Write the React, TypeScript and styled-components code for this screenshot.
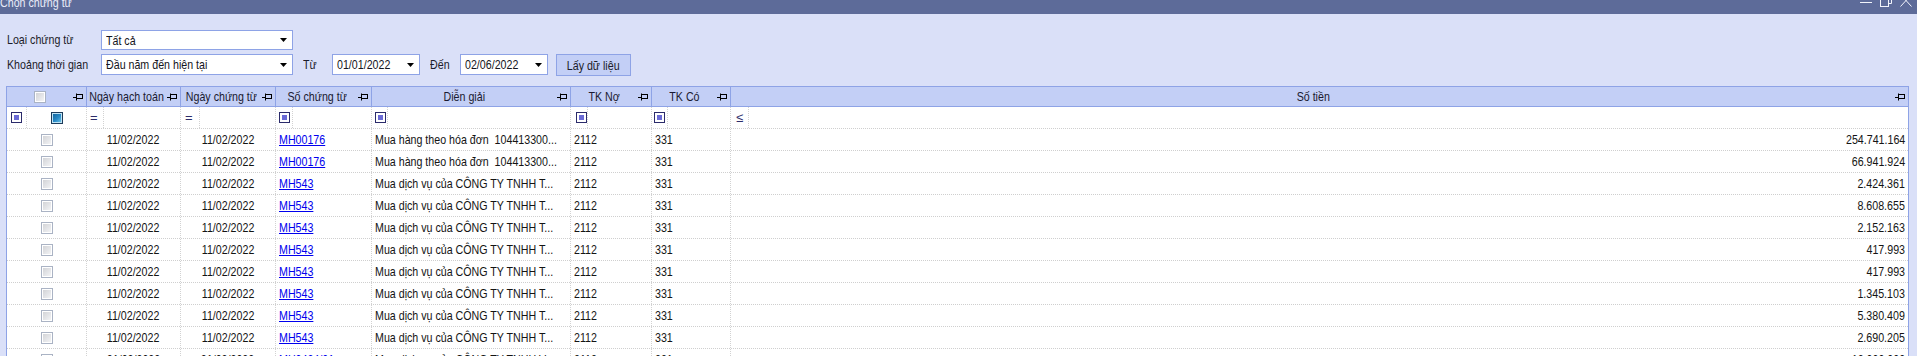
import React from 'react';
import styled, { createGlobalStyle } from 'styled-components';

const FONT = `"Liberation Sans", Arial, sans-serif`;

const GlobalStyle = createGlobalStyle`
  html, body { margin: 0; padding: 0; background: #dae0f8; }
  body { font-family: ${FONT}; font-size: 13px; color: #141414; }
  #root { width: 1917px; height: 356px; overflow: hidden; }
`;

/* Condensed text: the reference uses a narrow face, rendered here by scaling Liberation Sans */
const T = styled.span<{ $o?: 'left' | 'center' | 'right' }>`
  display: inline-block;
  white-space: pre;
  transform: scaleX(0.82);
  transform-origin: ${(p) => p.$o ?? 'left'} center;
`;

const Window = styled.div`
  width: 1917px;
  height: 356px;
  display: flex;
  flex-direction: column;
  background: #dae0f8;
  overflow: hidden;
`;

const TitleBar = styled.div`
  flex: 0 0 14px;
  height: 14px;
  background: #5d6b99;
  display: flex;
  align-items: flex-start;
  justify-content: space-between;
  overflow: hidden;
`;

const TitleText = styled.span`
  color: #e9ecf8;
  font-size: 13px;
  line-height: 14px;
  margin-top: -4px;
  white-space: nowrap;
`;

const Controls = styled.div`
  display: flex;
  gap: 8px;
  margin-top: -6px;
  margin-right: 5px;
`;

const Body = styled.div`
  flex: 1;
  display: flex;
  flex-direction: column;
  padding: 0 8px 0 6px;
  min-height: 0;
`;

const Form = styled.div`
  display: flex;
  flex-direction: column;
  gap: 4px;
  padding: 16px 0 0 1px;
`;

const FormRow = styled.div<{ $h: number }>`
  display: flex;
  align-items: flex-start;
  height: ${(p) => p.$h}px;
`;

const FieldLabel = styled.span<{ $h: number }>`
  width: 94px;
  flex: none;
  line-height: ${(p) => p.$h}px;
  white-space: nowrap;
  color: #1c1c2a;
`;

const InlineLabel = styled.span<{ $w: number }>`
  width: ${(p) => p.$w}px;
  margin-left: 10px;
  flex: none;
  line-height: 21px;
  white-space: nowrap;
  color: #1c1c2a;
`;

const Combo = styled.div<{ $w: number; $h: number }>`
  width: ${(p) => p.$w}px;
  height: ${(p) => p.$h}px;
  flex: none;
  box-sizing: border-box;
  border: 1px solid #8ea3e6;
  background: #fff;
  display: flex;
  align-items: center;
  justify-content: space-between;
  padding: 0 5px 0 4px;
  color: #141420;
  overflow: hidden;
`;

const Button = styled.button`
  width: 75px;
  height: 22px;
  margin-left: 8px;
  flex: none;
  box-sizing: border-box;
  border: 1px solid #8ea3e6;
  background: #c3cff6;
  font-family: ${FONT};
  font-size: 13px;
  color: #1c1c2a;
  padding: 0;
  display: flex;
  align-items: center;
  justify-content: center;
  overflow: hidden;
`;

const Grid = styled.div`
  margin-top: 10px;
  flex: 1;
  min-height: 0;
  border: 1px solid #8ea3e6;
  border-bottom: none;
  background: #fff;
  overflow: hidden;
`;

const GridRow = styled.div<{ $h: number; $kind: 'head' | 'filter' | 'data' }>`
  display: grid;
  grid-template-columns: 80px 94px 95px 96px 199px 81px 79px 1fr;
  height: ${(p) => p.$h}px;
  border-bottom: ${(p) => (p.$kind === 'head' ? '1px solid #8ea3e6' : '1px dotted #cfcfcf')};
  background: ${(p) => (p.$kind === 'head' ? '#c3cff6' : '#fff')};
`;

const HeadCell = styled.div<{ $last?: boolean }>`
  display: flex;
  align-items: center;
  padding-right: 2px;
  border-right: ${(p) => (p.$last ? 'none' : '1px solid #8ea3e6')};
  min-width: 0;
`;

const HeadText = styled.span`
  flex: 1;
  white-space: nowrap;
  overflow: hidden;
  color: #1a1a30;
  display: flex;
  justify-content: center;
  align-items: center;
`;

const Cell = styled.div<{ $align?: 'left' | 'center' | 'right'; $last?: boolean }>`
  display: flex;
  align-items: center;
  justify-content: ${(p) => (p.$align === 'center' ? 'center' : p.$align === 'right' ? 'flex-end' : 'flex-start')};
  padding: ${(p) => (p.$align === 'right' ? '0 3px 0 0' : p.$align === 'center' ? '0' : '0 0 0 3px')};
  border-right: ${(p) => (p.$last ? 'none' : '1px dotted #d2d2d2')};
  white-space: nowrap;
  overflow: hidden;
  min-width: 0;
  color: #141414;
`;

const FilterCell = styled.div<{ $last?: boolean }>`
  display: flex;
  align-items: stretch;
  border-right: ${(p) => (p.$last ? 'none' : '1px dotted #d2d2d2')};
  min-width: 0;
`;

const OpCell = styled.div<{ $w: number; $pad: number }>`
  width: ${(p) => p.$w}px;
  flex: none;
  box-sizing: border-box;
  padding-left: ${(p) => p.$pad}px;
  display: flex;
  align-items: center;
  border-right: 1px dotted #d2d2d2;
  color: #2c2c6a;
  font-size: 13px;
`;

const FilterValue = styled.div`
  flex: 1;
  display: flex;
  align-items: center;
  justify-content: center;
`;

const FilterSquare = styled.span`
  width: 11px;
  height: 11px;
  box-sizing: border-box;
  border: 1px solid #2b2b6b;
  background: #6b6bd6;
  box-shadow: inset 0 0 0 2px #fff;
  flex: none;
`;

const Check = styled.span<{ $blue?: boolean }>`
  width: 12px;
  height: 12px;
  box-sizing: border-box;
  flex: none;
  border: 1px solid ${(p) => (p.$blue ? '#1d3b5a' : '#aab3c4')};
  background: ${(p) =>
    p.$blue
      ? 'linear-gradient(135deg, #0f5e96 0%, #2a8cc8 55%, #7fd0ee 100%)'
      : 'linear-gradient(135deg, #cfd0d3 0%, #e6e7ea 60%, #f8f8f8 100%)'};
  box-shadow: inset 0 0 0 1px ${(p) => (p.$blue ? '#bfe3f4' : '#ffffff')};
`;

const Link = styled.a`
  display: inline-block;
  white-space: nowrap;
  color: #0000ee;
  text-decoration: underline;
  cursor: pointer;
  transform: scaleX(0.82);
  transform-origin: left center;
`;

const Pin = () => (
  <svg width="11" height="8" viewBox="0 0 11 8" style={{ flex: 'none' }}>
    <path d="M0 4.5H3.5M3.5 0.5V7.5" stroke="#000" strokeWidth="1" fill="none" />
    <rect x="3.5" y="1.5" width="6" height="4" stroke="#000" strokeWidth="1" fill="none" />
  </svg>
);

const Arrow = () => (
  <svg width="7" height="4" viewBox="0 0 7 4" style={{ flex: 'none' }}>
    <path d="M0 0H7L3.5 4Z" fill="#000" />
  </svg>
);

type Row = { d1: string; d2: string; no: string; desc: string; debit: string; credit: string; amount: string };

const HH = 'Mua hàng theo hóa đơn  104413300...';
const DV = 'Mua dịch vụ của CÔNG TY TNHH T...';

const rows: Row[] = [
  { d1: '11/02/2022', d2: '11/02/2022', no: 'MH00176', desc: HH, debit: '2112', credit: '331', amount: '254.741.164' },
  { d1: '11/02/2022', d2: '11/02/2022', no: 'MH00176', desc: HH, debit: '2112', credit: '331', amount: '66.941.924' },
  { d1: '11/02/2022', d2: '11/02/2022', no: 'MH543', desc: DV, debit: '2112', credit: '331', amount: '2.424.361' },
  { d1: '11/02/2022', d2: '11/02/2022', no: 'MH543', desc: DV, debit: '2112', credit: '331', amount: '8.608.655' },
  { d1: '11/02/2022', d2: '11/02/2022', no: 'MH543', desc: DV, debit: '2112', credit: '331', amount: '2.152.163' },
  { d1: '11/02/2022', d2: '11/02/2022', no: 'MH543', desc: DV, debit: '2112', credit: '331', amount: '417.993' },
  { d1: '11/02/2022', d2: '11/02/2022', no: 'MH543', desc: DV, debit: '2112', credit: '331', amount: '417.993' },
  { d1: '11/02/2022', d2: '11/02/2022', no: 'MH543', desc: DV, debit: '2112', credit: '331', amount: '1.345.103' },
  { d1: '11/02/2022', d2: '11/02/2022', no: 'MH543', desc: DV, debit: '2112', credit: '331', amount: '5.380.409' },
  { d1: '11/02/2022', d2: '11/02/2022', no: 'MH543', desc: DV, debit: '2112', credit: '331', amount: '2.690.205' },
  { d1: '21/02/2022', d2: '21/02/2022', no: 'MH0424/01', desc: 'Mua dịch vụ của CÔNG TY TNHH V...', debit: '2112', credit: '331', amount: '12.000.000' },
];

const headers = ['Ngày hạch toán', 'Ngày chứng từ', 'Số chứng từ', 'Diễn giải', 'TK Nợ', 'TK Có', 'Số tiền'];

export default function App() {
  return (
    <>
      <GlobalStyle />
      <Window>
        <TitleBar>
          <TitleText>
            <T>Chọn chứng từ</T>
          </TitleText>
          <Controls>
            <svg width="12" height="13" viewBox="0 0 12 13">
              <path d="M0 8.5H12" stroke="#f2f4fb" strokeWidth="1" />
            </svg>
            <svg width="12" height="13" viewBox="0 0 12 13">
              <rect x="0.5" y="3.5" width="8" height="9" stroke="#f2f4fb" fill="none" />
              <path d="M3 3.5V0.5H11.5V9.5H8.5" stroke="#f2f4fb" fill="none" />
            </svg>
            <svg width="12" height="13" viewBox="0 0 12 13">
              <path d="M0.5 0.5L11.5 12.5M11.5 0.5L0.5 12.5" stroke="#f2f4fb" fill="none" />
            </svg>
          </Controls>
        </TitleBar>
        <Body>
          <Form>
            <FormRow $h={20}>
              <FieldLabel $h={20}>
                <T>Loại chứng từ</T>
              </FieldLabel>
              <Combo $w={192} $h={20}>
                <T>Tất cả</T>
                <Arrow />
              </Combo>
            </FormRow>
            <FormRow $h={22}>
              <FieldLabel $h={21}>
                <T>Khoảng thời gian</T>
              </FieldLabel>
              <Combo $w={192} $h={21}>
                <T>Đầu năm đến hiện tại</T>
                <Arrow />
              </Combo>
              <InlineLabel $w={29}>
                <T>Từ</T>
              </InlineLabel>
              <Combo $w={88} $h={21}>
                <T>01/01/2022</T>
                <Arrow />
              </Combo>
              <InlineLabel $w={30}>
                <T>Đến</T>
              </InlineLabel>
              <Combo $w={88} $h={21}>
                <T>02/06/2022</T>
                <Arrow />
              </Combo>
              <Button>
                <T $o="center">Lấy dữ liệu</T>
              </Button>
            </FormRow>
          </Form>
          <Grid>
            <GridRow $h={19} $kind="head">
              <HeadCell>
                <HeadText>
                  <Check />
                </HeadText>
                <Pin />
              </HeadCell>
              {headers.map((h, i) => (
                <HeadCell key={h} $last={i === headers.length - 1}>
                  <HeadText>
                    <T $o="center">{h}</T>
                  </HeadText>
                  <Pin />
                </HeadCell>
              ))}
            </GridRow>
            <GridRow $h={21} $kind="filter">
              <FilterCell>
                <OpCell $w={20} $pad={4}>
                  <FilterSquare />
                </OpCell>
                <FilterValue>
                  <Check $blue />
                </FilterValue>
              </FilterCell>
              <FilterCell>
                <OpCell $w={17} $pad={3}>=</OpCell>
                <FilterValue />
              </FilterCell>
              <FilterCell>
                <OpCell $w={19} $pad={4}>=</OpCell>
                <FilterValue />
              </FilterCell>
              <FilterCell>
                <OpCell $w={17} $pad={3}>
                  <FilterSquare />
                </OpCell>
                <FilterValue />
              </FilterCell>
              <FilterCell>
                <OpCell $w={16} $pad={3}>
                  <FilterSquare />
                </OpCell>
                <FilterValue />
              </FilterCell>
              <FilterCell>
                <OpCell $w={17} $pad={5}>
                  <FilterSquare />
                </OpCell>
                <FilterValue />
              </FilterCell>
              <FilterCell>
                <OpCell $w={16} $pad={2}>
                  <FilterSquare />
                </OpCell>
                <FilterValue />
              </FilterCell>
              <FilterCell $last>
                <OpCell $w={18} $pad={5}>≤</OpCell>
                <FilterValue />
              </FilterCell>
            </GridRow>
            {rows.map((r, i) => (
              <GridRow key={i} $h={21} $kind="data">
                <Cell $align="center">
                  <Check />
                </Cell>
                <Cell $align="center">
                  <T $o="center">{r.d1}</T>
                </Cell>
                <Cell $align="center">
                  <T $o="center">{r.d2}</T>
                </Cell>
                <Cell>
                  <Link>{r.no}</Link>
                </Cell>
                <Cell>
                  <T>{r.desc}</T>
                </Cell>
                <Cell>
                  <T>{r.debit}</T>
                </Cell>
                <Cell>
                  <T>{r.credit}</T>
                </Cell>
                <Cell $align="right" $last>
                  <T $o="right">{r.amount}</T>
                </Cell>
              </GridRow>
            ))}
          </Grid>
        </Body>
      </Window>
    </>
  );
}
